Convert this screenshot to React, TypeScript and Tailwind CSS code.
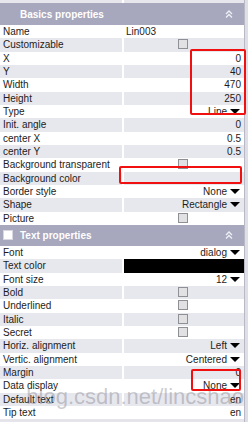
import React from 'react';

type Val =
  | { kind: 'left'; text: string }
  | { kind: 'right'; text: string }
  | { kind: 'drop'; text: string }
  | { kind: 'check' }
  | { kind: 'black' }
  | { kind: 'empty' };

type Row = { label: string; value: Val };

const basics: Row[] = [
  { label: 'Name', value: { kind: 'left', text: 'Lin003' } },
  { label: 'Customizable', value: { kind: 'check' } },
  { label: 'X', value: { kind: 'right', text: '0' } },
  { label: 'Y', value: { kind: 'right', text: '40' } },
  { label: 'Width', value: { kind: 'right', text: '470' } },
  { label: 'Height', value: { kind: 'right', text: '250' } },
  { label: 'Type', value: { kind: 'drop', text: 'Line' } },
  { label: 'Init. angle', value: { kind: 'right', text: '0' } },
  { label: 'center X', value: { kind: 'right', text: '0.5' } },
  { label: 'center Y', value: { kind: 'right', text: '0.5' } },
  { label: 'Background transparent', value: { kind: 'check' } },
  { label: 'Background color', value: { kind: 'empty' } },
  { label: 'Border style', value: { kind: 'drop', text: 'None' } },
  { label: 'Shape', value: { kind: 'drop', text: 'Rectangle' } },
  { label: 'Picture', value: { kind: 'check' } },
];

const textProps: Row[] = [
  { label: 'Font', value: { kind: 'drop', text: 'dialog' } },
  { label: 'Text color', value: { kind: 'black' } },
  { label: 'Font size', value: { kind: 'drop', text: '12' } },
  { label: 'Bold', value: { kind: 'check' } },
  { label: 'Underlined', value: { kind: 'check' } },
  { label: 'Italic', value: { kind: 'check' } },
  { label: 'Secret', value: { kind: 'check' } },
  { label: 'Horiz. alignment', value: { kind: 'drop', text: 'Left' } },
  { label: 'Vertic. alignment', value: { kind: 'drop', text: 'Centered' } },
  { label: 'Margin', value: { kind: 'right', text: '0' } },
  { label: 'Data display', value: { kind: 'drop', text: 'None' } },
  { label: 'Default text', value: { kind: 'right', text: 'en' } },
  { label: 'Tip text', value: { kind: 'right', text: 'en' } },
];

// petit triangle noir des listes déroulantes
function Arrow() {
  return (
    <svg width="10" height="5" viewBox="0 0 10 5" className="ml-[3px] shrink-0">
      <polygon points="0,0 10,0 5,5" fill="#000" />
    </svg>
  );
}

function Chevrons() {
  return (
    <svg width="8" height="8" viewBox="0 0 8 8" fill="none" stroke="#eef0f6" strokeWidth="1.3">
      <polyline points="1,4 4,1 7,4" />
      <polyline points="1,7.5 4,4.5 7,7.5" />
    </svg>
  );
}

function Header({ title, withBox, h }: { title: string; withBox?: boolean; h: string }) {
  return (
    <div className={`flex items-center bg-[#a7a7bd] ${h} pl-[3px] pr-[11px]`}>
      <div className="w-[10px] mr-[7px] flex items-center">
        {withBox && <div className="w-[10px] h-[10px] bg-white border border-[#d8d8e2]" />}
      </div>
      <span className="text-white font-bold text-[10px] flex-1">{title}</span>
      <Chevrons />
    </div>
  );
}

function Cell({ v }: { v: Val }) {
  switch (v.kind) {
    case 'left':
      return <span className="pl-[2px]">{v.text}</span>;
    case 'right':
      return <span className="ml-auto pr-[3px]">{v.text}</span>;
    case 'drop':
      return (
        <span className="ml-auto pr-[4px] flex items-center">
          {v.text}
          <Arrow />
        </span>
      );
    case 'check':
      return (
        <div className="w-full flex justify-center self-start pt-[1px]">
          <div className="w-[10px] h-[10px] bg-[#e1e1e4] border border-[#8f8f96] ml-[-2px]" />
        </div>
      );
    case 'black':
      return <div className="w-full h-full bg-black" />;
    default:
      return null;
  }
}

function Rows({ rows }: { rows: Row[] }) {
  return (
    <div>
      {rows.map((r, i) => {
        const bg = i % 2 === 0 ? 'bg-white' : 'bg-[#e7e7ee]';
        return (
          <div key={r.label} className="flex h-[13.33px] leading-[13px]">
            <div className={`w-[122px] ${bg} pl-[3px] whitespace-nowrap overflow-hidden`}>{r.label}</div>
            <div className="w-[2px] bg-white" />
            <div className={`flex-1 ${bg} flex items-center whitespace-nowrap`}>
              <Cell v={r.value} />
            </div>
          </div>
        );
      })}
    </div>
  );
}

export default function App() {
  return (
    <div
      className="relative w-[248px] h-[422px] overflow-hidden bg-[#e4e4ea] flex text-[10px] text-[#1c1c1c]"
      style={{ fontFamily: '"Liberation Sans", Arial, sans-serif' }}
    >
      <div className="w-[244px] flex flex-col">
        <div className="h-[3px] flex">
          <div className="w-[122px] bg-[#e6e6ec]" />
          <div className="w-[2px] bg-white" />
          <div className="flex-1 bg-[#e6e6ec]" />
        </div>
        <Header title="Basics properties" h="h-[22px]" />
        <Rows rows={basics} />
        <Header title="Text properties" withBox h="h-[21px]" />
        <Rows rows={textProps} />
      </div>
      <div className="w-[4px] border-l border-[#b9b9c6] bg-[#dedee6]" />

      {/* filigrane */}
      <div className="absolute left-0 right-[4px] top-[384px] text-right text-[22px] leading-[26px] whitespace-nowrap text-[rgba(110,110,120,0.36)] pointer-events-none">
        blog.csdn.net/lincshao
      </div>

      {/* encadrés rouges d'annotation */}
      <div className="absolute left-[190px] top-[49px] w-[56px] h-[66px] border-2 border-[#f01010] rounded-[2px]" />
      <div className="absolute left-[119px] top-[166px] w-[123px] h-[18px] border-2 border-[#f01010] rounded-[2px]" />
      <div className="absolute left-[191px] top-[369px] w-[50px] h-[22px] border-2 border-[#f01010] rounded-[2px]" />
    </div>
  );
}
